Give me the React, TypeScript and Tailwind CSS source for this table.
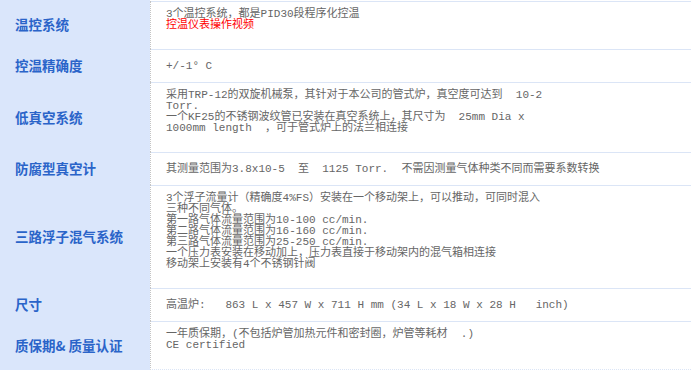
type Spec = {
  label: string;
  lines: { text: string; red?: boolean }[];
};

const specs: Spec[] = [
  {
    label: "温控系统",
    lines: [
      { text: "3个温控系统，都是PID30段程序化控温" },
      { text: "控温仪表操作视频", red: true },
      { text: "" },
    ],
  },
  { label: "控温精确度", lines: [{ text: "+/-1° C" }] },
  {
    label: "低真空系统",
    lines: [
      { text: "采用TRP-12的双旋机械泵，其针对于本公司的管式炉，真空度可达到  10-2" },
      { text: "Torr." },
      { text: "一个KF25的不锈钢波纹管已安装在真空系统上，其尺寸为  25mm Dia x" },
      { text: "1000mm length  ，可于管式炉上的法兰相连接" },
      { text: "" },
    ],
  },
  {
    label: "防腐型真空计",
    lines: [{ text: "其测量范围为3.8x10-5  至  1125 Torr.  不需因测量气体种类不同而需要系数转换" }],
  },
  {
    label: "三路浮子混气系统",
    lines: [
      { text: "3个浮子流量计（精确度4%FS）安装在一个移动架上，可以推动，可同时混入" },
      { text: "三种不同气体。" },
      { text: "第一路气体流量范围为10-100 cc/min." },
      { text: "第二路气体流量范围为16-160 cc/min." },
      { text: "第三路气体流量范围为25-250 cc/min." },
      { text: "一个压力表安装在移动加上，压力表直接于移动架内的混气箱相连接" },
      { text: "移动架上安装有4个不锈钢针阀" },
      { text: "" },
    ],
  },
  {
    label: "尺寸",
    lines: [{ text: "高温炉:   863 L x 457 W x 711 H mm (34 L x 18 W x 28 H   inch)" }],
  },
  {
    label: "质保期& 质量认证",
    lines: [
      { text: "一年质保期，(不包括炉管加热元件和密封圈，炉管等耗材  .)" },
      { text: "CE certified" },
      { text: "" },
    ],
  },
];

export default function App() {
  return (
    <div className="w-[691px] h-[370px] overflow-hidden bg-white">
      {specs.map((row, i) => (
        <div key={row.label} className="flex">
          <div className="w-[150px] shrink-0 bg-[#dae6fb] px-[15px] py-[7px] flex items-center">
            <span className="text-[13.5px] leading-[19px] font-bold text-[#2a64c9] [font-family:'Noto_Sans_CJK_SC',sans-serif]">
              {row.label}
            </span>
          </div>
          <div
            className={`flex-1 border-l border-dotted border-l-[#c4c4c4] ${i === 0 ? "mt-px" : ""} ${
              i === specs.length - 1 ? "border-b border-b-[#dbe5f6]" : ""
            }`}
          >
            <div className="h-full border-t border-[#dbe5f6] pl-[15px] pr-2 py-[7px] flex flex-col justify-center text-[11px] leading-[11px] text-[#666] [font-family:'Liberation_Mono','Noto_Sans_CJK_SC',monospace]">
              {row.lines.map((line, j) => (
                <div key={j} className={`h-[11px] whitespace-pre ${line.red ? "text-[#ff0000]" : ""}`}>
                  {line.text}
                </div>
              ))}
            </div>
          </div>
        </div>
      ))}
    </div>
  );
}
